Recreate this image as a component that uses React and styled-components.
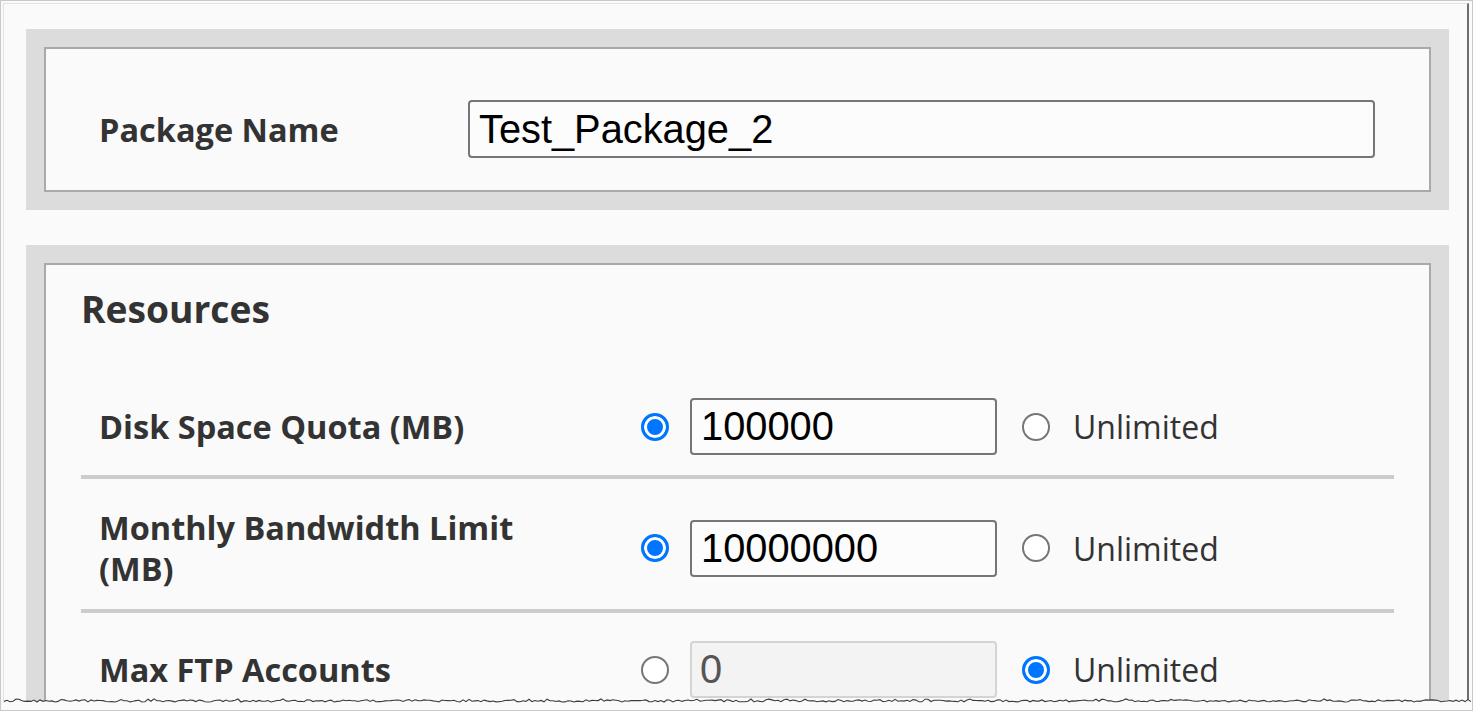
import React from "react";
import styled, { createGlobalStyle } from "styled-components";

const Global = createGlobalStyle`
  html, body { margin: 0; padding: 0; background: #ffffff; }
  body { font-family: "Open Sans", "Liberation Sans", sans-serif; }
  * { box-sizing: border-box; }
`;

const Window = styled.div`
  position: relative;
  width: 1473px;
  height: 711px;
  border: 1px solid #c9c9c9;
  background: #fafafa;
  padding: 2px 3px 0 2px;
`;

const Screen = styled.div`
  height: 700px;
  overflow: hidden;
  border-top: 1px solid #e2e2e2;
  border-left: 1px solid #e2e2e2;
  border-right: 2px solid #6e6e6e;
  background: #fafafa;
  padding: 25px 18px 0 22px;
`;

const Panel = styled.section`
  background: #dcdcdc;
  padding: 18px;
  & + & {
    margin-top: 35px;
  }
`;

const Card = styled.div`
  border: 2px solid #a9a9a9;
  background: #fafafa;
`;

const NameCard = styled(Card)`
  display: flex;
  align-items: center;
  padding: 51px 54px 32px 53px;
`;

const ResourceCard = styled(Card)`
  padding: 22px 35px 0 35px;
`;

const Label = styled.label`
  flex: 0 0 ${(p) => p.$width}px;
  margin-right: ${(p) => p.$gap || 0}px;
  font-family: "Open Sans", sans-serif;
  font-weight: 700;
  font-size: 32.5px;
  line-height: 41px;
  color: #333333;
`;

const TextInput = styled.input`
  display: block;
  height: ${(p) => p.$height}px;
  width: ${(p) => (p.$width ? `${p.$width}px` : "auto")};
  flex: ${(p) => (p.$width ? "none" : "1")};
  margin: 0;
  padding: 0 8px 0 9px;
  border: 2px solid #767676;
  border-radius: 4px;
  background: #fcfcfc;
  font-family: "Liberation Sans", Arial, sans-serif;
  font-size: 39.8px;
  color: #000000;
  outline: none;

  &:disabled {
    border-color: #d4d4d4;
    background: #f3f3f3;
    color: #555555;
    padding-left: 8px;
  }
`;

const Heading = styled.h2`
  margin: 0 0 40px;
  font-family: "Open Sans", sans-serif;
  font-weight: 700;
  font-size: 37.2px;
  line-height: 43px;
  color: #333333;
`;

const Row = styled.div`
  display: flex;
  align-items: center;
  padding: 28px 0 20px 18px;
  border-bottom: 4px solid #cccccc;
`;

const Radio = styled.span`
  flex: none;
  width: 28px;
  height: 28px;
  border-radius: 50%;
  border: ${(p) => (p.$checked ? "3px solid #0075ff" : "2.5px solid #767676")};
  background: ${(p) => (p.$checked ? "#0075ff" : "#ffffff")};
  box-shadow: ${(p) => (p.$checked ? "inset 0 0 0 3px #ffffff" : "none")};
`;

const FieldSlot = styled.div`
  margin: 0 25px 0 21px;
`;

const OptionText = styled.span`
  margin-left: 23px;
  font-family: "Open Sans", sans-serif;
  font-weight: 400;
  font-size: 32px;
  line-height: 41px;
  color: #333333;
`;

const Tear = styled.svg`
  position: absolute;
  left: 3px;
  top: 695px;
  display: block;
`;

function TornEdge({ width = 1467, height = 10 }) {
  // ragged bottom edge of the captured window
  let seed = 17;
  const rand = () => {
    seed = (seed * 1103515245 + 12345) % 2147483648;
    return seed / 2147483648;
  };
  const pts = [];
  for (let x = 0; x <= width; x += 3) {
    pts.push([x, 3.8 + rand() * 2.2 - (rand() > 0.85 ? 1 : 0)]);
  }
  const line = pts.map(([x, y], i) => `${i ? "L" : "M"}${x} ${y.toFixed(1)}`).join(" ");
  return (
    <Tear width={width} height={height} viewBox={`0 0 ${width} ${height}`}>
      <path d={`${line} L${width} ${height} L0 ${height} Z`} fill="#fafafa" />
      <path d={line} fill="none" stroke="#3c3c3c" strokeWidth="1.1" />
    </Tear>
  );
}

const rows = [
  { label: "Disk Space Quota (MB)", value: "100000", limited: true },
  { label: "Monthly Bandwidth Limit (MB)", value: "10000000", limited: true },
  { label: "Max FTP Accounts", value: "0", limited: false },
];

function ResourceRow({ label, value, limited }) {
  return (
    <Row>
      <Label $width={442} $gap={100}>
        {label}
      </Label>
      <Radio $checked={limited} />
      <FieldSlot>
        <TextInput
          $width={307}
          $height={57}
          defaultValue={value}
          disabled={!limited}
        />
      </FieldSlot>
      <Radio $checked={!limited} />
      <OptionText>Unlimited</OptionText>
    </Row>
  );
}

export default function App() {
  return (
    <>
      <Global />
      <Window>
        <Screen>
          <Panel>
            <NameCard>
              <Label $width={369}>Package Name</Label>
              <TextInput $height={58} defaultValue="Test_Package_2" />
            </NameCard>
          </Panel>
          <Panel>
            <ResourceCard>
              <Heading>Resources</Heading>
              {rows.map((r) => (
                <ResourceRow key={r.label} {...r} />
              ))}
            </ResourceCard>
          </Panel>
        </Screen>
        <TornEdge />
      </Window>
    </>
  );
}
